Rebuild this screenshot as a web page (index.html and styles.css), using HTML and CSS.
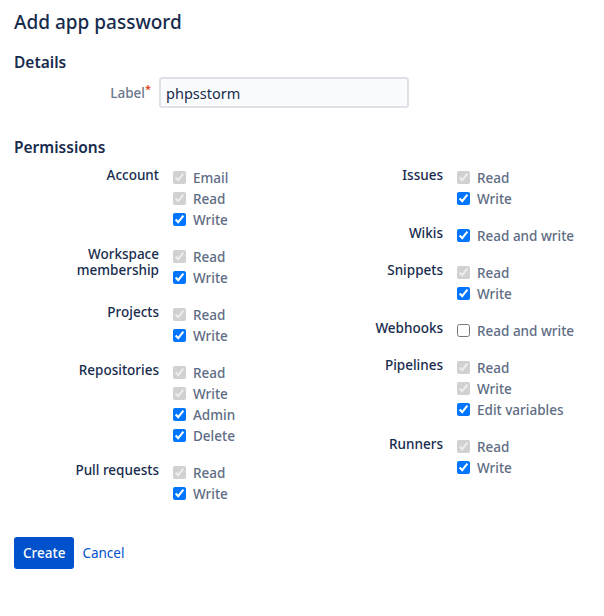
FILE: index.html
```html
<!DOCTYPE html>
<html>
<head>
<meta charset="utf-8">
<link rel="stylesheet" href="styles.css">
</head>
<body>
<div class="page">
  <h1 class="title">Add app password</h1>
  <h2 class="section">Details</h2>
  <div class="field">
    <label class="field-label" for="lbl">Label<span class="req">*</span></label>
    <input id="lbl" class="text-input" type="text" value="phpsstorm">
  </div>
  <h2 class="section perm-heading">Permissions</h2>
  <div class="perms">
    <div class="col">
      <div class="group">
        <div class="g-label">Account</div>
        <div class="opts">
          <label class="opt"><input type="checkbox" checked disabled>Email</label>
          <label class="opt"><input type="checkbox" checked disabled>Read</label>
          <label class="opt"><input type="checkbox" checked>Write</label>
        </div>
      </div>
      <div class="group">
        <div class="g-label">Workspace membership</div>
        <div class="opts">
          <label class="opt"><input type="checkbox" checked disabled>Read</label>
          <label class="opt"><input type="checkbox" checked>Write</label>
        </div>
      </div>
      <div class="group">
        <div class="g-label">Projects</div>
        <div class="opts">
          <label class="opt"><input type="checkbox" checked disabled>Read</label>
          <label class="opt"><input type="checkbox" checked>Write</label>
        </div>
      </div>
      <div class="group">
        <div class="g-label">Repositories</div>
        <div class="opts">
          <label class="opt"><input type="checkbox" checked disabled>Read</label>
          <label class="opt"><input type="checkbox" checked disabled>Write</label>
          <label class="opt"><input type="checkbox" checked>Admin</label>
          <label class="opt"><input type="checkbox" checked>Delete</label>
        </div>
      </div>
      <div class="group">
        <div class="g-label">Pull requests</div>
        <div class="opts">
          <label class="opt"><input type="checkbox" checked disabled>Read</label>
          <label class="opt"><input type="checkbox" checked>Write</label>
        </div>
      </div>
    </div>
    <div class="col">
      <div class="group">
        <div class="g-label">Issues</div>
        <div class="opts">
          <label class="opt"><input type="checkbox" checked disabled>Read</label>
          <label class="opt"><input type="checkbox" checked>Write</label>
        </div>
      </div>
      <div class="group">
        <div class="g-label">Wikis</div>
        <div class="opts">
          <label class="opt"><input type="checkbox" checked>Read and write</label>
        </div>
      </div>
      <div class="group">
        <div class="g-label">Snippets</div>
        <div class="opts">
          <label class="opt"><input type="checkbox" checked disabled>Read</label>
          <label class="opt"><input type="checkbox" checked>Write</label>
        </div>
      </div>
      <div class="group">
        <div class="g-label">Webhooks</div>
        <div class="opts">
          <label class="opt"><input type="checkbox">Read and write</label>
        </div>
      </div>
      <div class="group">
        <div class="g-label">Pipelines</div>
        <div class="opts">
          <label class="opt"><input type="checkbox" checked disabled>Read</label>
          <label class="opt"><input type="checkbox" checked disabled>Write</label>
          <label class="opt"><input type="checkbox" checked>Edit variables</label>
        </div>
      </div>
      <div class="group">
        <div class="g-label">Runners</div>
        <div class="opts">
          <label class="opt"><input type="checkbox" checked disabled>Read</label>
          <label class="opt"><input type="checkbox" checked>Write</label>
        </div>
      </div>
    </div>
  </div>
  <div class="actions">
    <button class="btn-primary" type="button">Create</button>
    <a class="link" href="#">Cancel</a>
  </div>
</div>
</body>
</html>
```

FILE: styles.css
```css
html, body {
  margin: 0;
  padding: 0;
  background: #ffffff;
}
body {
  font-family: "Noto Sans", "Open Sans", sans-serif;
  color: #172b4d;
  font-size: 13.5px;
}
.page {
  padding: 8px 14px 0 14px;
  width: 576px;
}
.title {
  margin: 0;
  font-size: 19px;
  font-weight: 500;
  line-height: 28px;
  color: #172b4d;
}
.section {
  margin: 15px 0 0 0;
  font-size: 15.5px;
  font-weight: 600;
  line-height: 22px;
  color: #172b4d;
}
.field {
  display: flex;
  align-items: center;
  gap: 8px;
  margin-top: 4px;
}
.field-label {
  width: 137px;
  text-align: right;
  color: #6b778c;
  font-weight: 500;
}
.req {
  color: #de350b;
  font-size: 11px;
  vertical-align: top;
  position: relative;
  top: -3px;
}
.text-input {
  box-sizing: border-box;
  width: 250px;
  height: 31px;
  border: 2px solid #dfe1e6;
  border-radius: 3px;
  background: #fafbfc;
  padding: 0 5px;
  font-family: inherit;
  font-size: 14.5px;
  color: #172b4d;
  outline: none;
}
.perm-heading {
  margin-top: 28px;
}
.perms {
  display: grid;
  grid-template-columns: 284px 284px;
  margin-top: 9px;
}
.group {
  display: flex;
  margin-bottom: 16px;
}
.g-label {
  width: 145px;
  flex: none;
  text-align: right;
  line-height: 16px;
  color: #172b4d;
  font-weight: 500;
}
.opts {
  display: flex;
  flex-direction: column;
  padding-top: 0;
}
.opt {
  display: flex;
  align-items: center;
  height: 21px;
  color: #5e6c84;
  font-weight: 500;
}
.opt input {
  width: 13px;
  height: 13px;
  margin: 0 7px 0 14px;
  accent-color: #0075ff;
}
.actions {
  display: flex;
  align-items: center;
  gap: 8px;
  margin-top: 17px;
}
.btn-primary {
  height: 32px;
  padding: 0 9px;
  border: none;
  border-radius: 3px;
  background: #0052cc;
  color: #ffffff;
  font-family: inherit;
  font-size: 13.5px;
  font-weight: 500;
}
.link {
  color: #0052cc;
  text-decoration: none;
}
```
